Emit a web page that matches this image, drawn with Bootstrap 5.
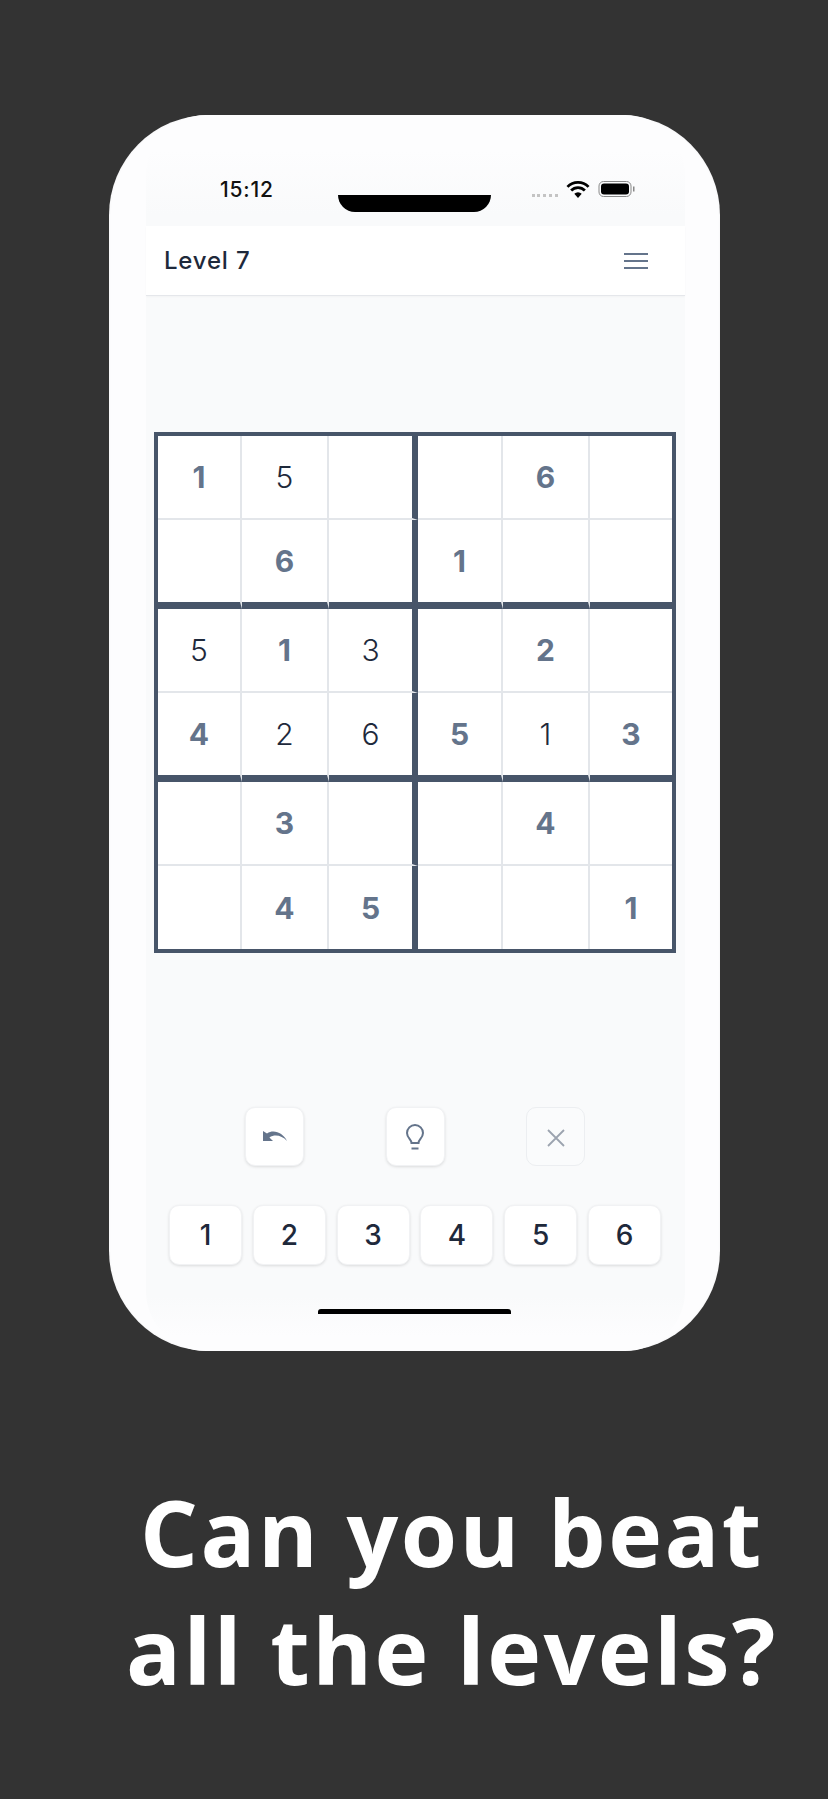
<!DOCTYPE html>
<html lang="en">

<head>
	<meta charset="utf-8">
	<meta name="viewport" content="width=device-width, initial-scale=1">
	<title>Can you beat all the levels?</title>
	<link href="https://cdn.jsdelivr.net/npm/bootstrap@5.3.5/dist/css/bootstrap.min.css" rel="stylesheet">
	<style>
		body { background: #333; font-family: Inter, "Liberation Sans", sans-serif; height: 1799px; overflow: hidden; }
		.phone { position: relative; width: 611px; height: 1236px; margin: 115px 0 0 109px; background: #fdfdfe; border-radius: 100px; padding: 0 35px 0 37px; box-shadow: inset 0 0 3px rgba(0,0,0,.05); }
		.notch { position: absolute; left: 229px; top: 80px; width: 153px; height: 17px; background: #000; border-radius: 0 0 22px 22px; }
		.status { height: 111px; padding: 61px 49px 0 74px; align-items: flex-start; background: linear-gradient(#fdfdfe 35px, #f9fafb 100px); border-radius: 60px 60px 0 0; }
		.clock { font-size: 21px; font-weight: 500; letter-spacing: .8px; line-height: 28px; color: #111; }
		.indicators { padding-top: 4px; }
		.dots { width: 26px; border-top: 3px dotted #c4c4c4; margin-top: 14px; }
		.topbar { height: 70px; padding: 0 36px 0 18px; border-bottom: 1px solid #e5e7eb; box-shadow: 0 1px 2px rgba(0,0,0,.03); }
		.level { font-size: 24px; font-weight: 500; letter-spacing: .8px; color: #1e293b; }
		.screen { background: linear-gradient(#f9fafb 1000px, #fdfdfe 1040px); height: 1055px; padding: 136px 0 0 8px; border-radius: 0 0 60px 60px; }
		.sudoku { display: grid; grid-template-columns: 84px 87px 89px 85px 87px 82px; border: 4px solid #475569; width: 522px; background: #fff; }
		.cell { height: 84px; border-right: 2px solid #e3e6ea; border-bottom: 2px solid #e3e6ea; font-size: 30px; font-weight: 340; line-height: 1; color: #1e293b; }
		.cell:nth-child(6n) { border-right: 0; }
		.cell:nth-child(n+31) { height: 83px; border-bottom: 0; }
		.cell:nth-child(6n+3) { border-right: 6px solid #475569; }
		.cell:nth-child(n+7):nth-child(-n+12), .cell:nth-child(n+19):nth-child(-n+24) { height: 89px; border-bottom: 7px solid #475569; }
		.given { color: #64748b; font-weight: 660; }
		.tools { margin-top: 154px; padding-left: 91px; gap: 81.500px; }
		.tool { width: 59px; height: 59px; padding: 0; background: #fff; border: 1px solid #f1f2f4; border-radius: 10px; box-shadow: 0 1px 3px rgba(0,0,0,.12); }
		.tool.off { background: #fafbfc; box-shadow: none; border-color: #eceef1; }
		.keys { margin-top: 39px; padding-left: 15px; gap: 10.800px; }
		.key { width: 73px; height: 60px; padding: 0; background: #fff; border: 1px solid #f1f2f4; border-radius: 10px; box-shadow: 0 1px 3px rgba(0,0,0,.12); font-size: 28px; font-weight: 500; color: #1e293b; }
		.homebar { width: 193px; height: 5px; margin: 44px 0 0 164px; background: #000; border-radius: 3px 3px 0 0; }
		.claim { margin: 122px 0 0; padding-left: 76px; font-family: "Open Sans", sans-serif; font-size: 91px; font-weight: 700; line-height: 118px; letter-spacing: 2.500px; color: #fff; text-align: center; }
	</style>
</head>

<body>
	<div class="phone">
		<div class="notch"></div>
		<div class="status d-flex justify-content-between">
			<span class="clock">15:12</span>
			<div class="indicators d-flex align-items-start gap-2">
				<span class="dots"></span>
				<svg width="24" height="19" viewBox="0 0 22 18"><path d="M1 6.500a14 14 0 0 1 20 0M4.500 10a9 9 0 0 1 13 0" fill="none" stroke="#000" stroke-width="2.600"/><path d="M7.500 13a5 5 0 0 1 7 0L11 17z"/></svg>
				<svg width="38" height="18" viewBox="0 0 38 18"><rect x="1" y="1.500" width="32" height="15" rx="4.500" fill="none" stroke="#888"/><rect x="3" y="3.500" width="28" height="11" rx="3"/><rect x="35" y="6.500" width="1.500" height="5" fill="#888"/></svg>
			</div>
		</div>
		<nav class="navbar topbar bg-white flex-nowrap">
			<span class="level">Level 7</span>
			<svg width="26" height="20" viewBox="0 0 26 20"><path d="M1 3h24M1 10h24M1 17h24" stroke="#64748b" stroke-width="2" fill="none"/></svg>
		</nav>
		<div class="screen">
			<div class="sudoku" id="board"></div>
			<div class="tools d-flex">
				<button class="btn tool" type="button"><svg width="30" height="24" viewBox="0 0 30 24"><path d="M3 6v10h10l-3.600-3.600C15 9 22 10.500 27 16 23 8 14 4 7 8.500z" fill="#64748b"/></svg></button>
				<button class="btn tool" type="button"><svg width="24" height="28" viewBox="0 0 24 28" fill="none" stroke="#64748b" stroke-width="2"><path d="M8.500 20c0-3.500-4.500-5-4.500-10a8 8 0 0 1 16 0c0 5-4.500 6.500-4.500 10zM8.500 25.500h7"/></svg></button>
				<button class="btn tool off" type="button"><svg width="20" height="20" viewBox="0 0 20 20"><path d="M2 2l16 16M18 2L2 18" stroke="#9ca3af" stroke-width="1.800" fill="none"/></svg></button>
			</div>
			<div class="keys d-flex" id="keys"></div>
			<div class="homebar"></div>
		</div>
	</div>
	<h1 class="claim">Can you beat<br>all the levels?</h1>

	<script>
		// g = given digit, plain number = player's digit
		const cells = ['g1',5,'','','g6','', '','g6','',"g1",'','', 5,'g1',3,'','g2','', 'g4',2,6,'g5',1,'g3', '','g3','','','g4','', '','g4','g5','','','g1'];
		document.getElementById('board').innerHTML = cells.map(c => {
			const given = String(c)[0] === 'g';
			return `<div class="cell d-flex align-items-center justify-content-center ${given ? 'given' : ''}">${String(c).replace('g', '')}</div>`;
		}).join('');
		document.getElementById('keys').innerHTML = [1, 2, 3, 4, 5, 6].map(n => `<button class="btn key" type="button">${n}</button>`).join('');
	</script>
	<script src="https://cdn.jsdelivr.net/npm/bootstrap@5.3.5/dist/js/bootstrap.bundle.min.js"></script>
</body>

</html>
